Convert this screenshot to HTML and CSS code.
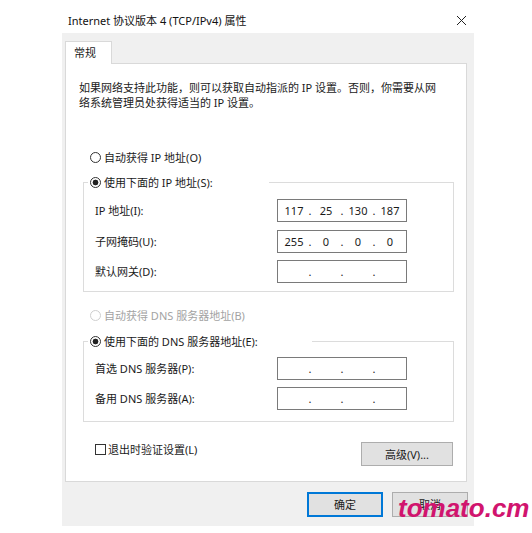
FILE: index.html
```html
<!DOCTYPE html>
<html lang="zh-CN">
<head>
    <meta charset="UTF-8">
    <meta name="viewport" content="width=device-width, initial-scale=1.0">
    <title>Internet 协议版本 4 (TCP/IPv4) 属性</title>
    <link rel="stylesheet" href="styles.css">
</head>
<body>
<div class="dialog">
    <div class="titlebar">
        <span class="title">Internet 协议版本 4 (TCP/IPv4) 属性</span>
        <svg class="close" width="9" height="9" viewBox="0 0 9 9">
            <path d="M0 0L9 9M9 0L0 9" stroke="#222" stroke-width="1" fill="none"/>
        </svg>
    </div>

    <div class="client">
        <div class="tabs">
            <div class="tab">常规</div>
        </div>

        <div class="panel">
            <p class="intro">如果网络支持此功能，则可以获取自动指派的 IP 设置。否则，你需要从网<br>络系统管理员处获得适当的 IP 设置。</p>

            <div class="options">
                <div class="radio-row ip-auto"><span class="radio"></span>自动获得 IP 地址(O)</div>

                <fieldset class="group ip-group">
                    <legend class="ip-legend"><span class="radio-label"><span class="radio checked"></span>使用下面的 IP 地址(S):</span></legend>
                    <div class="field-row">
                        <span class="label">IP 地址(I):</span>
                        <div class="ipbox">
                            <span class="oct">117</span><span class="dot">.</span><span class="oct">25</span><span class="dot">.</span><span class="oct">130</span><span class="dot">.</span><span class="oct">187</span>
                        </div>
                    </div>
                    <div class="field-row">
                        <span class="label">子网掩码(U):</span>
                        <div class="ipbox">
                            <span class="oct">255</span><span class="dot">.</span><span class="oct">0</span><span class="dot">.</span><span class="oct">0</span><span class="dot">.</span><span class="oct">0</span>
                        </div>
                    </div>
                    <div class="field-row">
                        <span class="label">默认网关(D):</span>
                        <div class="ipbox">
                            <span class="oct"></span><span class="dot">.</span><span class="oct"></span><span class="dot">.</span><span class="oct"></span><span class="dot">.</span><span class="oct"></span>
                        </div>
                    </div>
                </fieldset>

                <div class="radio-row dns-auto disabled"><span class="radio"></span>自动获得 DNS 服务器地址(B)</div>

                <fieldset class="group dns-group">
                    <legend class="dns-legend"><span class="radio-label"><span class="radio checked"></span>使用下面的 DNS 服务器地址(E):</span></legend>
                    <div class="field-row">
                        <span class="label">首选 DNS 服务器(P):</span>
                        <div class="ipbox">
                            <span class="oct"></span><span class="dot">.</span><span class="oct"></span><span class="dot">.</span><span class="oct"></span><span class="dot">.</span><span class="oct"></span>
                        </div>
                    </div>
                    <div class="field-row">
                        <span class="label">备用 DNS 服务器(A):</span>
                        <div class="ipbox">
                            <span class="oct"></span><span class="dot">.</span><span class="oct"></span><span class="dot">.</span><span class="oct"></span><span class="dot">.</span><span class="oct"></span>
                        </div>
                    </div>
                </fieldset>

                <div class="footer">
                    <label class="check"><span class="box"></span>退出时验证设置(L)</label>
                    <button class="btn btn-adv">高级(V)...</button>
                </div>
            </div>
        </div>

        <div class="actions">
            <button class="btn primary">确定</button>
            <button class="btn">取消</button>
        </div>
    </div>
</div>

<div class="watermark">tomato.cm</div>
</body>
</html>
```

FILE: styles.css
```css
* {
    margin: 0;
    padding: 0;
    box-sizing: border-box;
}

body {
    position: relative;
    width: 532px;
    height: 533px;
    overflow: hidden;
    background: #fff;
    font-family: "Noto Sans", "Noto Sans CJK SC", sans-serif;
    font-size: 11px;
    line-height: 15px;
    color: #1a1a1a;
}

.dialog {
    margin-left: 62px;
    width: 412px;
}

.titlebar {
    height: 33px;
    padding: 8px 8px 0 6px;
    display: flex;
    align-items: center;
    justify-content: space-between;
}

.titlebar .title {
    font-size: 11px;
    color: #111;
}

.client {
    background: #f0f0f0;
    padding: 8px 7px 9px 3px;
}

.tabs {
    display: flex;
}

.tab {
    position: relative;
    z-index: 1;
    width: 47px;
    height: 23px;
    padding: 3px 0 0 8px;
    margin-bottom: -1px;
    background: #fff;
    border: 1px solid #d9d9d9;
    border-bottom: none;
}

.panel {
    background: #fff;
    border: 1px solid #d9d9d9;
    padding: 16px 0 15px 13px;
}

.intro {
    white-space: nowrap;
}

.options {
    margin: 40px 0 0 4px;
    width: 371px;
}

.radio-row,
.radio-label {
    display: flex;
    align-items: center;
    height: 15px;
    white-space: nowrap;
}

.radio-row {
    padding-left: 7px;
}

.radio {
    width: 11px;
    height: 11px;
    margin-right: 3px;
    border: 1px solid #333;
    border-radius: 50%;
    background: #fff;
}

.radio.checked {
    background: radial-gradient(circle, #222 0, #222 2.6px, #fff 3.2px);
}

.radio-row.disabled {
    color: #a3a3a3;
}

.radio-row.disabled .radio {
    border-color: #cfcfcf;
}

.group {
    border: 1px solid #dcdcdc;
}

/* legend sits at the content edge, pull it back near the corner */
.group legend {
    margin-left: -7px;
    padding-left: 2px;
}

.ip-group {
    margin-top: 10px;
    padding: 9px 0 8px 11px;
}

.ip-legend {
    width: 181px;
}

.dns-auto {
    margin-top: 16px;
}

.dns-group {
    margin-top: 11px;
    padding: 8px 0 11px 11px;
}

.dns-legend {
    width: 224px;
}

.field-row {
    display: flex;
    align-items: center;
    height: 23px;
}

.ip-group .field-row + .field-row {
    margin-top: 7.5px;
}

.dns-group .field-row + .field-row {
    margin-top: 7px;
}

.field-row .label {
    width: 182px;
}

.ipbox {
    display: flex;
    align-items: center;
    width: 130px;
    height: 23px;
    padding-left: 2px;
    background: #fff;
    border: 1px solid #7a7a7a;
}

.ipbox .oct {
    width: 28px;
    text-align: center;
}

.ipbox .dot {
    width: 4px;
    text-align: center;
}

.footer {
    display: flex;
    justify-content: space-between;
    align-items: flex-start;
    margin-top: 20px;
}

.check {
    display: flex;
    align-items: center;
    height: 15px;
    padding-left: 12px;
}

.check .box {
    width: 11px;
    height: 11px;
    margin-right: 2px;
    border: 1px solid #333;
    background: #fff;
}

.btn {
    width: 76px;
    height: 25px;
    background: #e1e1e1;
    border: 1px solid #adadad;
    font: inherit;
    color: #1a1a1a;
}

.btn-adv {
    width: 92px;
    height: 24px;
    margin-right: 1px;
}

.btn.primary {
    border: 2px solid #0078d7;
}

.actions {
    display: flex;
    justify-content: flex-end;
    gap: 9px;
    margin: 10px -1px 0 0;
}

.watermark {
    position: absolute;
    left: 398px;
    top: 493px;
    font-family: "Liberation Sans", sans-serif;
    font-style: italic;
    font-weight: bold;
    font-size: 26px;
    line-height: 30px;
    color: #d1146e;
    white-space: nowrap;
}
```
